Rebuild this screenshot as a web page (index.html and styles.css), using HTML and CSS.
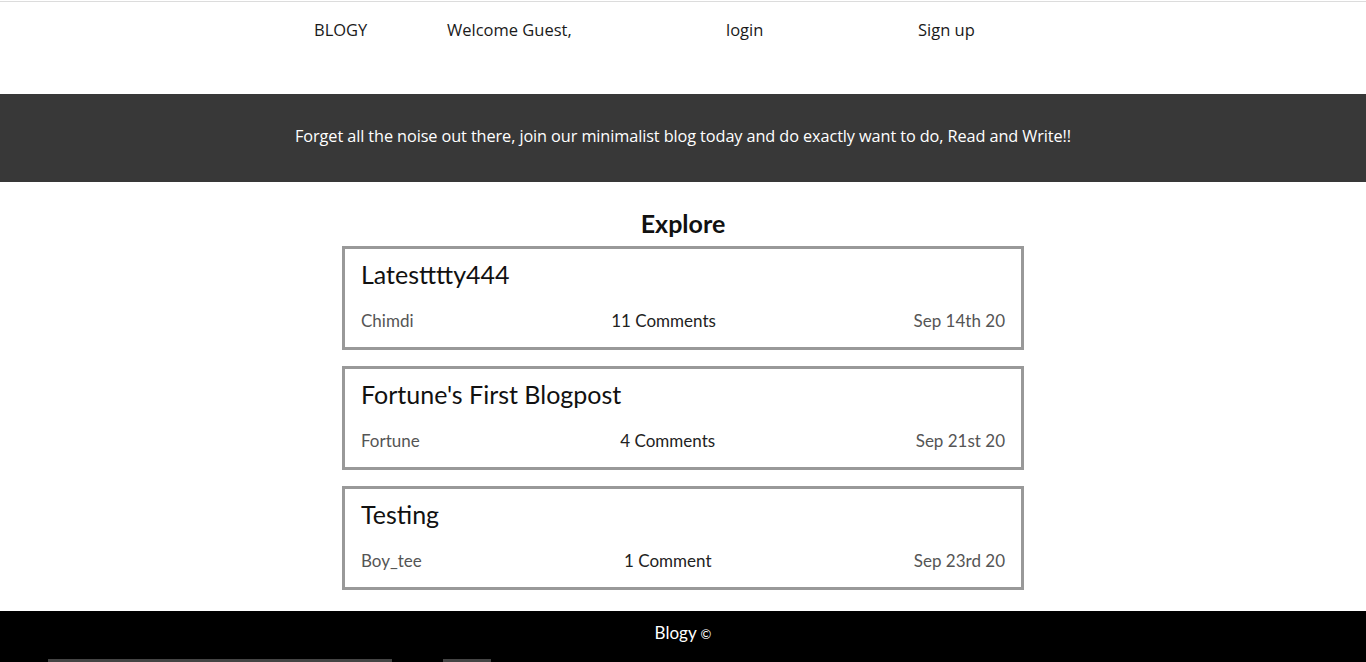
FILE: index.html
```html
<!DOCTYPE html>
<html>
<head>
<meta charset="utf-8">
<link rel="stylesheet" href="styles.css">
</head>
<body>
<header class="topnav">
  <span class="brand">BLOGY</span>
  <span class="welcome">Welcome Guest,</span>
  <a class="navlink" href="#">login</a>
  <a class="navlink" href="#">Sign up</a>
</header>
<section class="banner">
  <p>Forget all the noise out there, join our minimalist blog today and do exactly want to do, Read and Write!!</p>
</section>
<main class="explore">
  <h1>Explore</h1>
  <article class="card">
    <h2>Latestttty444</h2>
    <div class="meta"><span class="author">Chimdi</span><span class="comments">11 Comments</span><span class="date">Sep 14th 20</span></div>
  </article>
  <article class="card">
    <h2>Fortune's First Blogpost</h2>
    <div class="meta"><span class="author">Fortune</span><span class="comments">4 Comments</span><span class="date">Sep 21st 20</span></div>
  </article>
  <article class="card">
    <h2>Testing</h2>
    <div class="meta"><span class="author">Boy_tee</span><span class="comments">1 Comment</span><span class="date">Sep 23rd 20</span></div>
  </article>
</main>
<footer class="footer">
  <div class="footer-text">Blogy <span class="copy">©</span></div>
  <div class="footer-bars"><span class="bar bar-wide"></span><span class="bar bar-small"></span></div>
</footer>
</body>
</html>
```

FILE: styles.css
```css
* { box-sizing: border-box; }
html, body { margin: 0; padding: 0; }
body {
  font-family: "Open Sans", "Noto Sans", sans-serif;
  color: #111;
  background: #fff;
  padding-top: 1px;
}
.topnav {
  display: grid;
  grid-template-columns: 133px 279px 192px auto;
  padding-left: 314px;
  height: 93px;
  padding-top: 16px;
  border-top: 1px solid #dcdcdc;
  font-size: 16.5px;
  font-weight: 400;
  color: #1a1a1a;
}
.topnav span, .topnav a { line-height: 24px; }
.navlink { color: #1a1a1a; text-decoration: none; }
.banner {
  background: #383838;
  height: 88px;
  display: flex;
  align-items: center;
  justify-content: center;
  padding-bottom: 4px;
}
.banner p {
  margin: 0;
  color: #fff;
  font-size: 16.3px;
  letter-spacing: -0.1px;
}
.explore {
  width: 682px;
  margin: 0 auto;
  padding-top: 24px;
  padding-bottom: 21px;
  display: flex;
  flex-direction: column;
  gap: 16px;
  font-family: "Lato", "Noto Sans", sans-serif;
}
.explore h1 {
  margin: 0 0 -10px;
  text-align: center;
  font-size: 25px;
  font-weight: 700;
  line-height: 34px;
  color: #111;
}
.card {
  border: 3px solid #999;
  height: 104px;
  padding: 9px 16px 0 16px;
}
.card h2 {
  margin: 0;
  font-size: 25px;
  font-weight: 400;
  line-height: 32px;
  color: #111;
}
.meta {
  margin-top: 19px;
  display: flex;
  justify-content: space-between;
  font-size: 17px;
  line-height: 24px;
}
.author, .date { color: #555; }
.comments { color: #222; }
.footer {
  background: #000;
  color: #fff;
  padding-top: 10px;
}
.footer-text {
  text-align: center;
  font-family: "Lato", "Noto Sans", sans-serif;
  font-size: 17px;
  line-height: 24px;
  height: 38px;
}
.copy { font-size: 13px; }
.footer-bars {
  display: flex;
  padding-left: 48px;
  gap: 51px;
}
.bar { display: block; height: 4px; background: #444; }
.bar-wide { width: 344px; }
.bar-small { width: 48px; }
```
